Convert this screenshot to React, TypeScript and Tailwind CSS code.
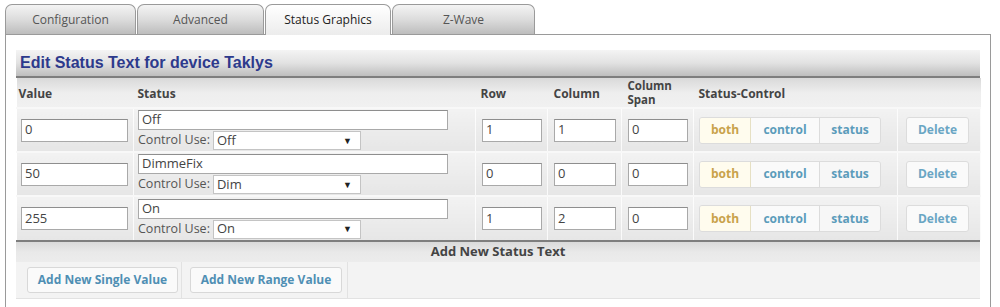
import React from 'react';

type Row = { value: string; status: string; use: string; row: string; col: string; span: string };

const rows: Row[] = [
  { value: '0', status: 'Off', use: 'Off', row: '1', col: '1', span: '0' },
  { value: '50', status: 'DimmeFix', use: 'Dim', row: '0', col: '0', span: '0' },
  { value: '255', status: 'On', use: 'On', row: '1', col: '2', span: '0' },
];

const tabs = [
  { label: 'Configuration', w: 'w-[131px]' },
  { label: 'Advanced', w: 'w-[127px]' },
  { label: 'Status Graphics', w: 'w-[126px]', active: true },
  { label: 'Z-Wave', w: 'w-[143px]' },
];

const font = { fontFamily: '"Open Sans", "Noto Sans", sans-serif' };

function TextBox({ value, className = '' }: { value: string; className?: string }) {
  return (
    <div
      className={`flex items-center border border-[#a9a9a9] border-t-[#8e8e8e] bg-white px-[3px] text-[13px] text-[#444] ${className}`}
    >
      {value}
    </div>
  );
}

function Cell({ children, className = '' }: { children?: React.ReactNode; className?: string }) {
  return (
    <td
      className={`border-x border-white/80 bg-gradient-to-b from-[#f2f2f2] to-[#e6e6e6] align-middle ${className}`}
    >
      {children}
    </td>
  );
}

export default function App() {
  return (
    <div className="h-[307px] w-[1000px] overflow-hidden bg-white text-[#333]" style={font}>
      {/* tabs */}
      <div className="flex gap-[1px] pl-[5px] pt-[4px]">
        {tabs.map((t) => (
          <div
            key={t.label}
            className={`flex h-[30px] items-center justify-center rounded-t-[7px] border border-b-0 border-[#9a9a9a] text-[12px] ${t.w} ${
              t.active
                ? 'relative z-10 -mb-px h-[31px] bg-gradient-to-b from-white to-[#ececec] text-[#222]'
                : 'bg-gradient-to-b from-[#f4f4f4] via-[#dcdcdc] to-[#bdbdbd] text-[#555]'
            }`}
          >
            {t.label}
          </div>
        ))}
      </div>

      {/* content box */}
      <div className="ml-[5px] w-[986px] border border-[#9a9a9a] bg-white px-[10px] pb-[20px] pt-[15px]">
        <div className="flex h-[28px] items-center border-b-[2px] border-[#7e7e7e] bg-gradient-to-b from-[#f4f4f4] via-[#e2e2e2] to-[#bebebe] pl-[4px]">
          <span
            className="text-[16px] font-bold text-[#2d3a8c]"
            style={{ fontFamily: '"Liberation Sans", Arial, sans-serif' }}
          >
            Edit Status Text for device Taklys
          </span>
        </div>

        <table className="w-[964px] table-fixed border-collapse">
          <colgroup>
            <col className="w-[117px]" />
            <col className="w-[342px]" />
            <col className="w-[72px]" />
            <col className="w-[74px]" />
            <col className="w-[72px]" />
            <col className="w-[204px]" />
            <col className="w-[83px]" />
          </colgroup>
          <thead>
            <tr className="h-[30px] bg-gradient-to-b from-[#d9d9d9] via-[#eeeeee] to-[#f1f1f1] text-left text-[12px] font-bold leading-[12px] text-[#444]">
              <th className="pl-[2px] pt-[3px]">Value</th>
              <th className="pl-[4px] pt-[3px]">Status</th>
              <th className="pl-[5px] pt-[3px]">Row</th>
              <th className="pl-[6px] pt-[3px]">Column</th>
              <th className="pl-[6px] pt-[1px] text-[11.5px] leading-[14px]">
                <div>Column</div>
                <div>Span</div>
              </th>
              <th className="pl-[5px] pt-[3px]">Status-Control</th>
              <th></th>
            </tr>
          </thead>
          <tbody>
            {rows.map((r) => (
              <tr key={r.value} className="h-[44px] border-t-[2px] border-[#f8f8f8]">
                <Cell className="pl-[4px]">
                  <TextBox value={r.value} className="h-[23px] w-[107px]" />
                </Cell>
                <Cell className="pl-[4px]">
                  <TextBox value={r.status} className="h-[20px] w-[310px]" />
                  <div className="mt-[1px] flex items-center text-[12.5px] text-[#555]">
                    <span className="mr-[3px]">Control Use:</span>
                    <div className="flex h-[19px] w-[148px] items-center justify-between border border-[#c4c4c4] bg-white pl-[3px] pr-[8px] text-[13px] text-[#444]">
                      <span>{r.use}</span>
                      <span className="text-[9px] text-[#222]">▼</span>
                    </div>
                  </div>
                </Cell>
                <Cell className="pl-[6px]">
                  <TextBox value={r.row} className="h-[23px] w-[60px]" />
                </Cell>
                <Cell className="pl-[6px]">
                  <TextBox value={r.col} className="h-[23px] w-[62px]" />
                </Cell>
                <Cell className="pl-[6px]">
                  <TextBox value={r.span} className="h-[23px] w-[60px]" />
                </Cell>
                <Cell className="pl-[5px]">
                  <div className="flex h-[27px] w-[182px] overflow-hidden rounded-[3px] border border-[#dcdcdc] text-[12px] font-bold">
                    <div className="flex w-[51px] items-center justify-center border-r border-[#e6e0c4] bg-[#fffcee] text-[#c9a24a]">
                      both
                    </div>
                    <div className="flex w-[69px] items-center justify-center border-r border-[#dcdcdc] bg-[#fafafa] text-[#5b9cbb]">
                      control
                    </div>
                    <div className="flex flex-1 items-center justify-center bg-[#f7f7f7] text-[#5b9cbb]">
                      status
                    </div>
                  </div>
                </Cell>
                <Cell className="pl-[8px]">
                  <div className="flex h-[27px] w-[63px] items-center justify-center rounded-[3px] border border-[#dcdcdc] bg-[#fafafa] text-[12px] font-bold text-[#6aa6c4]">
                    Delete
                  </div>
                </Cell>
              </tr>
            ))}
          </tbody>
        </table>

        <div className="flex h-[22px] items-center justify-center border-t-[2px] border-[#7e7e7e] bg-gradient-to-b from-[#dadada] via-[#e9e9e9] to-[#ececec] text-[13px] font-bold text-[#444]">
          Add New Status Text
        </div>
        <div className="flex h-[37px] items-center gap-[3px] border-b border-[#e2e2e2] bg-[#f3f3f3]">
          <div className="flex h-full items-center border-r border-[#e2e2e2] pl-[11px] pr-[3px]">
            <div className="flex h-[26px] w-[151px] items-center justify-center rounded-[3px] border border-[#d8d8d8] bg-[#fafafa] text-[12px] font-bold text-[#4f8fb4]">
              Add New Single Value
            </div>
          </div>
          <div className="flex h-full items-center border-r border-[#e2e2e2] px-[5px]">
            <div className="flex h-[26px] w-[152px] items-center justify-center rounded-[3px] border border-[#d8d8d8] bg-[#fafafa] text-[12px] font-bold text-[#4f8fb4]">
              Add New Range Value
            </div>
          </div>
        </div>
      </div>
    </div>
  );
}
